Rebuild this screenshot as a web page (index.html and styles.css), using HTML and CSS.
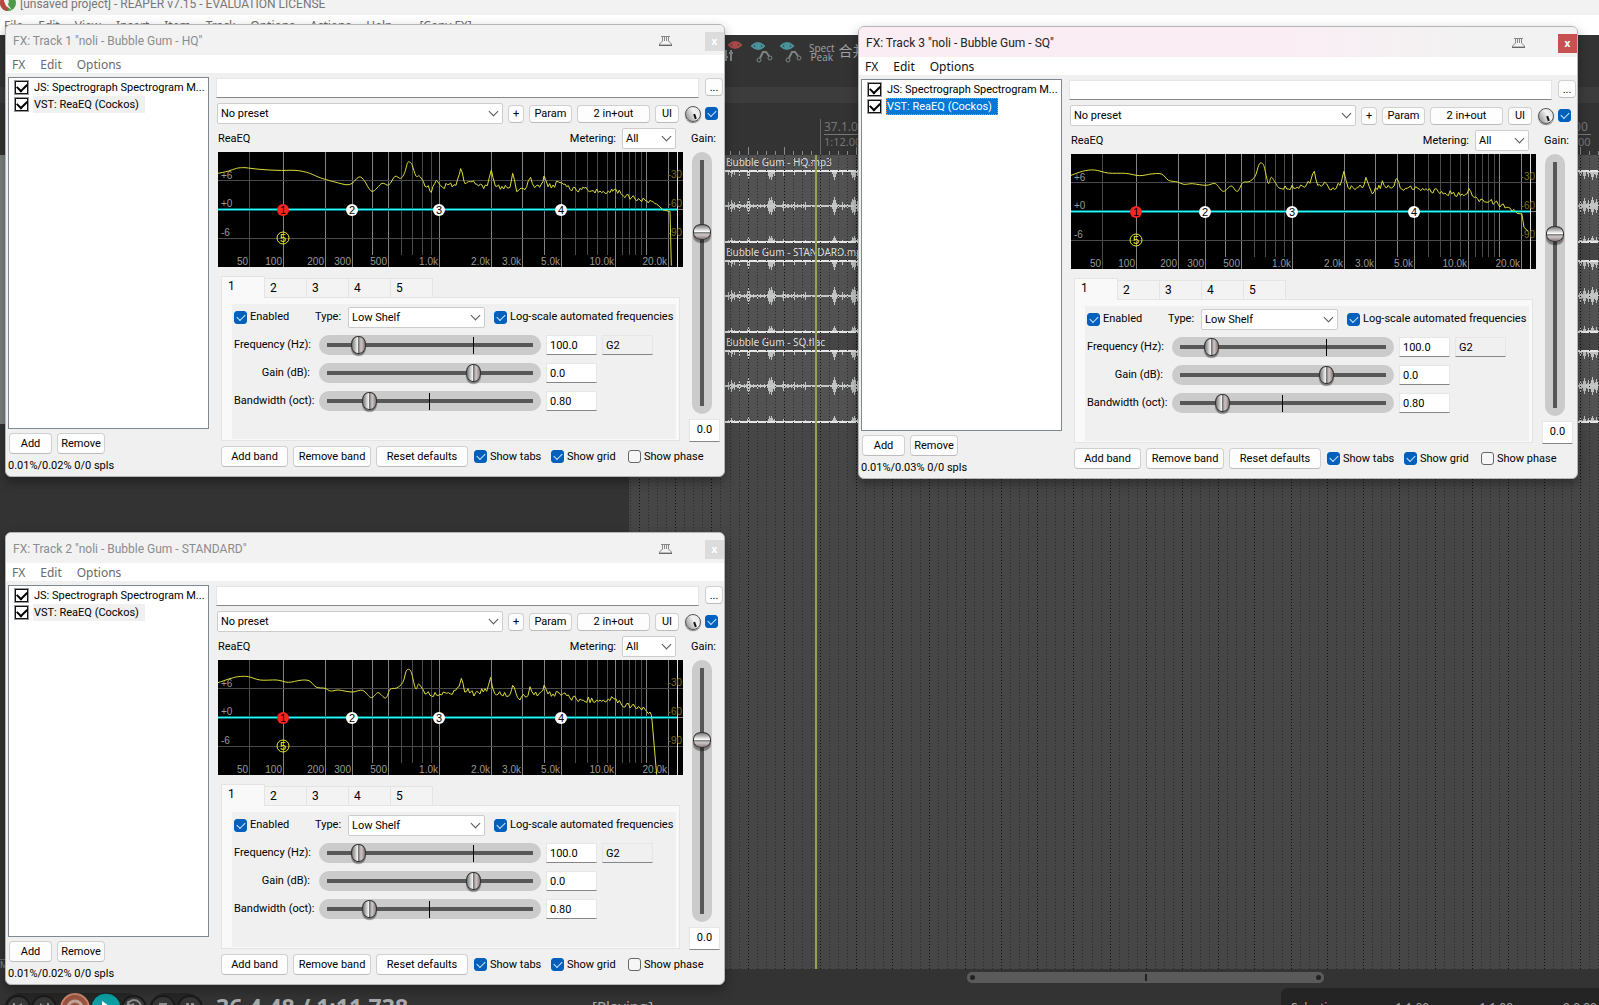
FILE: index.html
```html
<!DOCTYPE html>
<html lang="en">
<head>
<meta charset="utf-8">
<title>[unsaved project] - REAPER v7.15 - EVALUATION LICENSE</title>
<link rel="stylesheet" href="styles.css">
</head>
<body>
<header class="app-title">
  <svg class="app-logo" viewBox="0 0 16 16" aria-hidden="true">
    <circle cx="8" cy="8" r="8" fill="#4f9a4a"/>
    <path d="M0 8a8 8 0 0 1 5-7.500l3 15.500A8 8 0 0 1 0 8z" fill="#b8483f"/>
    <path d="M4 1l5 5-1 4 4 5-6-4-2-5z" fill="#f2f2f2"/>
  </svg>
  <span>[unsaved project] - REAPER v7.15 - EVALUATION LICENSE</span>
</header>
<nav class="app-menu">
  <button>File</button><button>Edit</button><button>View</button><button>Insert</button><button>Item</button><button>Track</button><button>Options</button><button>Actions</button><button>Help</button><button class="menu-extra">[Copy FX]</button>
</nav>
<div class="toolbar">
  <svg class="tool tool-red" viewBox="0 0 22 24" aria-hidden="true">
    <path d="M7 5q6-6 12 0q-6 6-12 0z" fill="none" stroke="#a84a4a" stroke-width="2"/><circle cx="13" cy="5" r="3" fill="#a84a4a"/>
    <path d="M4 10v11M9 10v11M2 17h4M7 13h4" stroke="#7d8484" stroke-width="2"/>
  </svg>
  <svg class="tool" viewBox="0 0 22 24" aria-hidden="true">
    <path d="M1 6q6-6 12 0q-6 6-12 0z" fill="none" stroke="#4a929c" stroke-width="2"/><circle cx="7" cy="6" r="3" fill="#4a929c"/>
    <g fill="none" stroke="#7d8484"><circle cx="8" cy="20" r="2"/><circle cx="19" cy="18" r="2"/><path d="M9 18l3-6h3l3 4" stroke-width="2"/></g>
  </svg>
  <svg class="tool" viewBox="0 0 22 24" aria-hidden="true">
    <path d="M1 6q6-6 12 0q-6 6-12 0z" fill="none" stroke="#4a929c" stroke-width="2"/><circle cx="7" cy="6" r="3" fill="#4a929c"/>
    <g fill="none" stroke="#7d8484"><circle cx="8" cy="20" r="2"/><circle cx="19" cy="18" r="2"/><path d="M9 18l3-6h3l3 4" stroke-width="2"/></g>
  </svg>
  <button class="tool-text">Spect<br>Peak</button>
  <button class="tool-text tool-cjk">合并</button>
</div>
<div class="dock-strip"></div>
<main class="workspace">
  <aside class="track-panel"><div class="track-meters"></div><span class="master-label">M</span></aside>
  <section class="arrange">
    <div class="ruler">
      <svg class="ruler-ticks" aria-hidden="true"></svg>
      <div class="ruler-mark"><span>37.1.00</span><span>1:12.000</span></div>
      <div class="ruler-mark ruler-mark-far"><span>39.1.00</span><span>1:16.000</span></div>
    </div>
    <div class="lanes">
      <div class="item"><div class="item-name">Bubble Gum - HQ.mp3</div><svg class="wave" aria-hidden="true"></svg></div>
      <div class="item"><div class="item-name">Bubble Gum - STANDARD.mp3</div><svg class="wave" aria-hidden="true"></svg></div>
      <div class="item"><div class="item-name">Bubble Gum - SQ.flac</div><svg class="wave" aria-hidden="true"></svg></div>
      <svg class="grid-lines" aria-hidden="true"></svg>
      <div class="play-cursor"></div>
    </div>
  </section>
</main>
<div class="scroll-row"><div class="scroll-thumb"><i></i><b></b><i></i></div></div>
<footer class="transport">
  <svg class="transport-buttons" viewBox="0 0 210 20" aria-hidden="true">
    <rect x="4" y="1" width="138" height="34" rx="16" fill="#262626"/><rect x="149" y="1" width="54" height="34" rx="16" fill="#262626"/>
    <g fill="#363636" stroke="#1b1b1b" stroke-width="2"><circle cx="18" cy="16" r="12"/><circle cx="44" cy="16" r="12"/><circle cx="134" cy="16" r="12"/><circle cx="163" cy="16" r="12"/><circle cx="190" cy="16" r="12"/></g>
    <circle cx="75" cy="16" r="14" fill="#9a5540" stroke="#c9866a" stroke-width="2"/><circle cx="75" cy="16" r="7" fill="none" stroke="#c0a59b" stroke-width="3"/>
    <circle cx="106" cy="16" r="15" fill="#0b9fa4" stroke="#1b1b1b"/><path d="M102 9l10 7-10 7z" fill="#fff"/>
    <g fill="#8d8d8d"><path d="M13 11h2v8h-2zM22 11v8l-6-4zM40 11l6 4-6 4zM47 11h2v8h-2zM159 11h8v8h-8zM186 11h3v8h-3zM191 11h3v8h-3z"/></g>
    <path d="M129 20a7 7 0 1 1 10 0M128 9l1 5 5-2" fill="none" stroke="#8d8d8d" stroke-width="2"/>
  </svg>
  <span class="position">36.4.48 / 1:11.738</span>
  <span class="state">[Playing]</span>
  <div class="selection"><span>Selection:</span><span>1.1.00</span><span>1.1.00</span><span>0.0.00</span></div>
</footer>

<template id="fx-window">
  <section class="fx">
    <header class="fx-title">
      <h2></h2>
      <svg class="pin" viewBox="0 0 15 12" aria-hidden="true"><path d="M3 1.500h9M4.500 2v4l-3 3v1h12v-1l-3-3V2M6.500 2v4M8.500 2v4" fill="none" stroke="#888"/><path d="M1 10.500h13" stroke="#666"/></svg>
      <button class="close" aria-label="Close">x</button>
    </header>
    <nav class="fx-menu"><button>FX</button><button>Edit</button><button>Options</button></nav>
    <div class="fx-body">
      <div class="chain">
        <div class="chain-list">
          <label><input type="checkbox" checked><span>JS: Spectrograph Spectrogram M...</span></label>
          <label class="current"><input type="checkbox" checked><span>VST: ReaEQ (Cockos)</span></label>
        </div>
        <div class="chain-buttons"><button class="btn">Add</button><button class="btn">Remove</button></div>
        <p class="cpu"></p>
      </div>
      <div class="plugin">
        <div class="comment-row"><input type="text" aria-label="FX comment"><button class="btn more">...</button></div>
        <div class="preset-row">
          <span class="select preset"><select aria-label="Preset"><option>No preset</option></select></span>
          <button class="btn plus">+</button><button class="btn param">Param</button><button class="btn pins">2 in+out</button><button class="btn ui">UI</button>
          <span class="knob"></span><input class="tick" type="checkbox" checked aria-label="Bypass">
        </div>
        <div class="reaeq">
          <div class="eq-main">
            <div class="eq-head"><span class="eq-name">ReaEQ</span><label class="metering">Metering: <span class="select"><select><option>All</option></select></span></label></div>
            <svg class="graph" viewBox="0 0 465 115" role="img" aria-label="EQ curve"></svg>
            <div class="tabs"><button class="on">1</button><button>2</button><button>3</button><button>4</button><button>5</button></div>
            <div class="band">
              <div class="band-inner">
                <div class="band-top">
                  <label class="check enabled"><input class="tick" type="checkbox" checked>Enabled</label>
                  <label class="type">Type: <span class="select"><select><option>Low Shelf</option></select></span></label>
                  <label class="check"><input class="tick" type="checkbox" checked>Log-scale automated frequencies</label>
                </div>
                <div class="param-row"><label>Frequency (Hz):</label><span class="slide tick-709"><input type="range" max="1000" value="154"></span><input type="text" value="100.0" aria-label="Frequency value"><input type="text" value="G2" readonly aria-label="Note"></div>
                <div class="param-row"><label>Gain (dB):</label><span class="slide tick-709"><input type="range" max="1000" value="709"></span><input type="text" value="0.0" aria-label="Gain value"></div>
                <div class="param-row"><label>Bandwidth (oct):</label><span class="slide tick-495"><input type="range" max="1000" value="208"></span><input type="text" value="0.80" aria-label="Bandwidth value"></div>
              </div>
            </div>
            <div class="eq-foot">
              <button class="btn add-band">Add band</button><button class="btn remove-band">Remove band</button><button class="btn reset">Reset defaults</button>
              <label class="check"><input class="tick" type="checkbox" checked>Show tabs</label>
              <label class="check"><input class="tick" type="checkbox" checked>Show grid</label>
              <label class="check"><input class="tick" type="checkbox">Show phase</label>
            </div>
          </div>
          <div class="eq-side">
            <label class="gain-label">Gain:</label>
            <span class="vslide"><input type="range" max="1000" value="709"></span>
            <input class="gain-value" type="text" value="0.0" aria-label="Output gain value">
          </div>
        </div>
      </div>
    </div>
  </section>
</template>
<script src="script.js"></script>
</body>
</html>
```
FILE: styles.css
```css
* { box-sizing: border-box; }
body {
  margin: 0; height: 100vh; overflow: hidden; display: flex; flex-direction: column;
  background: #333; font: 11px/14px Roboto, "Liberation Sans", sans-serif; color: #000;
}
button, input, select { font: inherit; color: inherit; margin: 0; padding: 0; }
button { border: 0; background: none; white-space: nowrap; }
svg { display: block; }

/* main application frame */
.app-title { flex: none; height: 15px; background: #f2f2f2; display: flex; align-items: center; color: #777; font: 12px/16px Roboto, sans-serif; overflow: hidden; }
.app-title span { margin-top: -7px; }
.app-logo { width: 16px; height: 16px; margin: -10px 4px 0 0; flex: none; }
.app-menu { flex: none; height: 20px; background: #fff; display: flex; gap: 15px; padding-left: 4px; overflow: hidden; color: #6a6a6a; font: 12px/20px "Noto Sans", sans-serif; }
.app-menu button { line-height: 22px; }
.menu-extra { margin-left: 12px; }
.toolbar { flex: none; height: 52px; background: #333; display: flex; padding: 5px 0 0 722px; gap: 7px; }
.tool { width: 22px; height: 24px; flex: none; }
.tool-text { color: #a3a3a3; font: 10px/9px "Open Sans", sans-serif; align-self: start; padding-top: 4px; }
.tool-cjk { font: 14px/16px "Noto Sans CJK SC", sans-serif; margin-left: -3px; padding-top: 2px; }
.dock-strip { flex: none; height: 16px; background: #3c3c3c; }
.workspace { flex: 1; min-height: 0; display: flex; }
.track-panel { flex: none; width: 629px; position: relative; padding-top: 52px; background: #333; color: #888; display: flex; flex-direction: column; justify-content: space-between; }
.track-meters { height: 269px; width: 5px; background: #7c8282; }
.master-label { height: 10px; line-height: 10px; border-top: 1px solid #666; font-size: 9px; }
.arrange { flex: 1; display: flex; flex-direction: column; min-width: 0; }
.ruler { flex: none; height: 52px; position: relative; overflow: hidden; background: #333; }
.ruler-ticks { width: 100%; height: 52px; }
.ruler-mark { position: absolute; left: 195px; top: 17px; display: flex; flex-direction: column; color: #777; font: 12px/14px "Noto Sans", sans-serif; }
.ruler-mark span:first-child { border-bottom: 1px solid #777; }
.ruler-mark span:last-child { font-size: 11px; }
.ruler-mark-far { left: 918px; }
.lanes { flex: 1; position: relative; background: #464646; overflow: hidden; }
.item { height: 90px; background: #525252; border-bottom: 2px solid #454545; }
.item-name { height: 15px; padding-left: 97px; background: #454545; color: #ddd; font: 10px/15px "Noto Sans", sans-serif; }
.item:first-child .item-name { background: #515151; }
.wave { width: 100%; height: 74px; }
.grid-lines { position: absolute; inset: 0; width: 100%; height: 100%; }
.play-cursor { position: absolute; left: 186px; top: 0; bottom: 0; width: 2px; background: #98a24c; }
.scroll-row { flex: none; height: 19px; padding: 3px 0 0 967px; background: #333; }
.scroll-thumb { width: 357px; height: 11px; border-radius: 5px; background: #5a5a5a; display: flex; justify-content: space-between; align-items: center; padding: 0 3px; }
.scroll-thumb i { width: 5px; height: 5px; border-radius: 50%; background: #222; }
.scroll-thumb b { width: 2px; height: 7px; background: #222; }
.transport { flex: none; height: 17px; background: #333; display: flex; overflow: hidden; color: #aaa; }
.transport-buttons { width: 210px; height: 20px; margin-top: 4px; flex: none; }
.position { width: 382px; padding-left: 6px; font: bold 23px/38px "Noto Sans", sans-serif; height: 17px; }
.state { font: 15px/36px "Noto Sans", sans-serif; height: 17px; flex: 1; }
.selection { width: 318px; height: 40px; background: #242424; border-top-left-radius: 6px; display: flex; justify-content: space-between; padding: 10px 2px 0 10px; font: 12px/20px "Noto Sans", sans-serif; }

/* floating FX windows */
.fx {
  position: absolute; width: 720px; border: 1px solid #b5b5b5; border-radius: 6px; background: #f0f0f0;
  overflow: hidden; box-shadow: 0 5px 12px rgba(0,0,0,.35);
}
.fx-title { height: 30px; display: flex; align-items: center; background: #f2f2f2; padding: 0 0 0 7px; color: #8c8c8c; }
.fx-title h2 { flex: 1; margin: 0; padding-top: 2px; font: 12px/16px Roboto, sans-serif; }
.pin { width: 15px; height: 12px; margin: 2px 32px 0 0; }
.close { width: 19px; height: 19px; background: #dcdcdc; color: #fff; font: bold 10px/17px "Noto Sans", sans-serif; margin-top: 3px; }
.fx-menu { height: 18px; display: flex; gap: 15px; background: #fff; padding-left: 6px; color: #6a6a6a; font: 12px/17px "Noto Sans", sans-serif; }
.fx.active .fx-title { background: linear-gradient(90deg, #faeef4 60%, #f2f2f2 85%); color: #222; }
.fx.active .close { background: #c75050; }
.fx.active .fx-menu { color: #111; }
.fx-body { display: flex; gap: 7px; padding: 4px 0 4px 2px; }
.chain { width: 201px; display: flex; flex-direction: column; }
.chain-list { height: 352px; border: 1px solid #7f8790; background: #fff; padding-top: 1px; }
.chain-list label { display: flex; align-items: center; height: 17px; padding-left: 6px; gap: 5px; }
.chain-list label span { padding: 1px 6px 0 1px; line-height: 16px; white-space: nowrap; }
.chain-list .current span { background: #f0f0f0; }
.fx.active .current span { background: #0078d7; color: #fff; outline: 1px dotted #ff8728; outline-offset: -1px; }
.chain-list input, .tick { appearance: none; flex: none; width: 13px; height: 13px; display: grid; place-items: center; }
.chain-list input { border: 1px solid #111; outline: 1px solid #999; background: #fff; }
.chain-list input::after { content: ""; width: 8px; height: 5px; border: solid #000; border-width: 0 0 2px 2px; transform: translateY(-1px) rotate(-45deg); }
.tick { border: 1px solid #666; border-radius: 3px; background: #f6f6f6; }
.tick:checked { border-color: #0060bb; background: #0060bb; }
.tick:checked::after { content: ""; width: 7px; height: 4px; border: solid #dcebfa; border-width: 0 0 1px 1px; transform: translateY(-1px) rotate(-45deg); }
.chain-buttons { display: flex; gap: 5px; padding: 4px 0 4px 1px; }
.btn { flex: none; height: 21px; border: 1px solid #d0d0d0; border-bottom-color: #bcbcbc; border-radius: 4px; background: #fdfdfd; padding-top: 1px; }
.chain-buttons .btn:first-child { width: 43px; }
.chain-buttons .btn:last-child { width: 48px; }
.cpu { margin: 0; line-height: 16px; height: 14px; }
.plugin { flex: 1; padding-top: 1px; min-width: 0; }
input[type=text] { border: 1px solid #e6e6e6; border-bottom-color: #868686; background: #fff; height: 20px; padding: 0 3px; min-width: 0; outline: 0; }
.comment-row { display: flex; gap: 6px; padding-right: 1px; }
.comment-row input { flex: 1; }
.more { width: 18px; height: 18px; line-height: 14px; }
.preset-row { display: flex; align-items: center; padding: 5px 6px 4px 1px; }
.preset-row .btn { height: 18px; }
.preset { flex: 1; }
.select { position: relative; display: inline-flex; height: 21px; }
.select::after { content: ""; position: absolute; right: 6px; top: 5px; width: 6px; height: 6px; border: solid #555; border-width: 0 1px 1px 0; transform: rotate(45deg); pointer-events: none; }
select { appearance: none; width: 100%; border: 1px solid #ccc; border-radius: 2px; background: #fff; padding: 1px 3px 0; }
.plus { width: 16px; margin-left: 5px; }
.param { width: 43px; margin-left: 5px; }
.pins { width: 73px; margin-left: 5px; }
.ui { width: 24px; margin-left: 5px; }
.knob { width: 16px; height: 16px; margin: 0 4px 0 6px; border: 1px solid #555; border-radius: 50%; background: linear-gradient(60deg, #888, #f4f4f4 60%, #ddd); box-shadow: 0 1px 1px #777; }
.knob::after { content: ""; display: block; width: 2px; height: 5px; margin: 7px 0 0 8px; background: #111; transform: rotate(-20deg); }
.reaeq { display: flex; gap: 6px; padding-left: 2px; }
.eq-main { width: 465px; flex: none; }
.eq-head { height: 24px; display: flex; justify-content: space-between; align-items: start; padding-right: 7px; }
.eq-name { line-height: 21px; }
.metering { display: flex; align-items: center; gap: 6px; }
.metering .select { width: 54px; }
.graph { width: 465px; height: 115px; background: #000; font: 10px "Liberation Sans", Arial, sans-serif; }
.graph .minor { stroke: #4a4a4a; }
.graph .major { stroke: #838383; }
.graph .scale { fill: #9a9a9a; text-anchor: end; }
.graph .db { fill: #9a9a9a; }
.graph .level { fill: #77711c; text-anchor: end; }
.graph .node { text-anchor: middle; font-size: 11px; }
.graph .curve { fill: none; stroke: #dcdc3c; vector-effect: non-scaling-stroke; }
.tabs { display: flex; align-items: end; height: 30px; padding-left: 3px; }
.tabs button { width: 42px; height: 19px; border: 1px solid #e4e4e4; border-left: 0; border-bottom: 0; background: #f3f3f3; text-align: left; padding-left: 5px; font-size: 12px; }
.tabs .on { width: 44px; height: 22px; background: #f9f9f9; border-left: 1px solid #e4e4e4; padding: 0 0 4px 6px; margin-bottom: -1px; position: relative; }
.band { margin: 0 3px 0 3px; height: 144px; border: 1px solid #e4e4e4; background: #f9f9f9; padding: 6px 3px 1px 10px; }
.band-inner { height: 135px; background: #f0f0f0; padding: 3px 0 0 2px; display: flex; flex-direction: column; gap: 8px; }
.band-top { display: flex; align-items: center; height: 20px; }
.check { display: flex; align-items: center; gap: 3px; white-space: nowrap; }
.enabled { width: 81px; }
.type { display: flex; align-items: center; justify-content: space-between; width: 170px; margin-right: 9px; }
.type .select { width: 137px; }
.param-row { display: grid; grid-template-columns: 76px 226px 51px 51px; column-gap: 5px; height: 20px; align-items: center; }
.param-row label { text-align: right; white-space: nowrap; }
.param-row .slide { margin-left: 4px; }
.param-row input[readonly] { background: #f0f0f0; }
.slide { position: relative; height: 20px; width: 222px; }
.slide::after { content: ""; position: absolute; top: 2px; width: 1px; height: 17px; background: #000; }
.tick-709::after { left: 154px; }
.tick-495::after { left: 110px; }
.slide input { appearance: none; position: relative; z-index: 1; display: block; width: 222px; height: 20px; background: none; }
.slide::before { content: ""; position: absolute; inset: 0; border-radius: 10px; background: linear-gradient(#575757, #575757) 8px 8px / 206px 4px no-repeat #cbcbcb; }
.slide input::-webkit-slider-thumb { appearance: none; width: 15px; height: 18px; border: 1px solid #333; border-radius: 7px / 8px; background: linear-gradient(90deg, #777, #ddd 35%, #fff 48%, #777 50%, #d0c8c8 70%, #877); box-shadow: 0 2px 1px rgba(0,0,0,.4); }
.eq-foot { display: flex; align-items: center; padding: 5px 0 0 3px; }
.eq-foot .btn { margin-right: 5px; }
.add-band { width: 67px; }
.remove-band { width: 78px; }
.reset { width: 92px; }
.eq-foot .check { width: 76px; flex: none; margin-left: 1px; }
.eq-side { width: 31px; }
.gain-label { display: block; height: 24px; line-height: 21px; padding-left: 2px; }
.vslide { display: block; width: 20px; height: 262px; margin: 0 0 5px 3px; border-radius: 10px; background: linear-gradient(#575757, #575757) 8px 8px / 4px 246px no-repeat #cbcbcb; }
.vslide input { appearance: none; writing-mode: vertical-lr; direction: rtl; display: block; width: 20px; height: 262px; background: none; }
.vslide input::-webkit-slider-thumb { appearance: none; width: 18px; height: 16px; border: 1px solid #333; border-radius: 8px / 7px; background: linear-gradient(#777, #ddd 35%, #fff 48%, #777 50%, #d0c8c8 70%, #877); box-shadow: 0 3px 1px rgba(0,0,0,.4); }
.eq-side input.gain-value { width: 31px; height: 23px; padding-bottom: 3px; text-align: center; }
```
FILE: script.js
```js
// deterministic noise, -1..1
function noise(n) {
  const v = Math.sin(n * 127.1 + 11.7) * 43758.5453;
  return (v - Math.floor(v)) * 2 - 1;
}

// Smooth (Catmull-Rom) up to x = start, then straight pieces with analyser jitter up to x = end.
function curvePath(points, start, end) {
  let d = 'M' + points[0].join(' ');
  for (let i = 1; i < points.length; i++) {
    const [x0, y0] = points[i - 1], [x1, y1] = points[i];
    if (x0 >= end) {
      d += `L${x1} ${y1}`;
    } else if (x0 >= start) {
      for (let x = x0 + 5; x < x1 - 2; x += 5) {
        const t = (x - x0) / (x1 - x0);
        d += `L${x} ${Math.round(y0 + (y1 - y0) * t + noise(x) * 9)}`;
      }
      d += `L${x1} ${y1}`;
    } else {
      const [xa, ya] = points[Math.max(i - 2, 0)], [xb, yb] = points[i + 1];
      d += `C${Math.round(x0 + (x1 - xa) / 6)} ${Math.round(y0 + (y1 - ya) / 6)} ${Math.round(x1 - (xb - x0) / 6)} ${Math.round(y1 - (yb - y0) / 6)} ${x1} ${y1}`;
    }
  }
  return d;
}

const spectra = {
  hq: { box: '24 36 1395 345', points: [[24,100],[55,93],[80,85],[105,83],[150,88],[200,91],[255,91],[290,97],[325,111],[350,119],[375,126],[418,134],[445,112],[460,118],[486,154],[516,130],[536,135],[555,109],[572,115],[584,98],[592,70],[598,66],[606,74],[618,108],[628,108],[640,124],[664,157],[682,124],[698,142],[712,134],[738,136],[752,86],[766,132],[790,122],[806,138],[832,137],[844,90],[856,138],[900,142],[908,100],[920,155],[950,140],[962,112],[974,143],[994,132],[1002,108],[1014,140],[1050,128],[1070,140],[1100,152],[1118,142],[1150,152],[1208,154],[1218,148],[1240,168],[1290,180],[1340,192],[1360,210],[1378,214],[1380,214],[1384,377]] },
  standard: { box: '24 60 1395 345', points: [[24,128],[60,116],[85,110],[115,110],[150,120],[200,120],[235,127],[270,121],[297,122],[318,141],[345,145],[362,153],[385,150],[427,156],[458,151],[484,173],[504,158],[527,174],[540,148],[560,144],[578,128],[588,95],[596,88],[604,98],[617,146],[626,132],[640,150],[660,166],[722,162],[742,143],[754,115],[764,156],[786,152],[792,168],[800,154],[830,154],[842,112],[854,160],[900,164],[908,136],[918,160],[930,180],[940,163],[954,166],[960,140],[972,164],[994,155],[1002,136],[1014,162],[1060,160],[1080,174],[1115,180],[1160,180],[1218,176],[1235,195],[1290,203],[1310,214],[1324,225],[1326,240],[1340,404]] },
  sq: { box: '32 462 1353 345', points: [[32,526],[65,514],[100,510],[140,519],[190,520],[232,527],[265,522],[295,522],[316,541],[342,546],[360,553],[385,551],[425,556],[452,551],[475,574],[498,558],[516,574],[532,548],[550,545],[567,530],[578,496],[586,489],[594,500],[606,550],[615,532],[628,550],[645,566],[712,562],[730,540],[740,514],[750,556],[776,552],[784,568],[815,556],[826,514],[838,562],[880,564],[890,532],[900,560],[909,582],[918,563],[932,566],[938,542],[950,564],[972,558],[980,536],[990,564],[1035,560],[1060,570],[1100,574],[1140,582],[1184,582],[1190,566],[1205,592],[1250,604],[1300,622],[1330,640],[1344,642],[1350,682],[1362,694]] }
};

const full = [[107,1],[134,1],[170,1],[221,1],[273,1],[304,1],[343,1],[397,1],[450,1],[65,1],[31,0]];
const short = [154,326,428,183,194,204,213,357,369,379,389,404,411,417,423];
const freqs = [[30,'50'],[64,'100'],[106,'200'],[133,'300'],[169,'500'],[220,'1.0k'],[272,'2.0k'],[303,'3.0k'],[342,'5.0k'],[396,'10.0k'],[449,'20.0k']];

function graphMarkup(s) {
  let g = '<g shape-rendering="crispEdges">';
  short.forEach((x, i) => g += `<path class="${i < 3 ? 'major' : 'minor'}" d="M${x} 0V103"/>`);
  full.forEach(([x, m]) => g += `<path class="${m ? 'major' : 'minor'}" d="M${x} 0V115"/>`);
  [28, 86].forEach(y => g += `<path class="minor" d="M0 ${y}H465"/>`);
  g += '<path class="major" d="M0 57H465"/><path d="M459 0V115" stroke="#ddd"/></g>';
  freqs.forEach(([x, t]) => g += `<text class="scale" x="${x}" y="113">${t}</text>`);
  [[27, '+6'], [55, '+0'], [84, '-6']].forEach(([y, t]) => g += `<text class="db" x="3" y="${y}">${t}</text>`);
  [[26, '-30'], [55, '-60'], [84, '-90']].forEach(([y, t]) => g += `<text class="level" x="464" y="${y}">${t}</text>`);
  g += '<g shape-rendering="crispEdges"><path d="M0 56h459v3H0z" fill="#0a7273"/></g>';
  g += `<svg viewBox="${s.box}" width="465" height="115" preserveAspectRatio="none"><path class="curve" d="${curvePath(s.points, 640, 1324)}"/></svg>`;
  g += '<path d="M0 57h459v1H0z" fill="#2ff" shape-rendering="crispEdges"/>';
  [[65, 1, '#f22'], [134, 2, '#fff'], [221, 3, '#fff'], [343, 4, '#fff']].forEach(([x, n, c]) =>
    g += `<circle cx="${x}" cy="58" r="6" fill="${c}"/><text class="node" x="${x}" y="62">${n}</text>`);
  g += '<circle cx="65" cy="86" r="6" fill="none" stroke="#ee2"/><text class="node" x="65" y="90" fill="#ee2">5</text>';
  return g;
}

const windows = [
  { left: 5, top: 24, title: 'FX: Track 1 "noli - Bubble Gum - HQ"', cpu: '0.01%/0.02% 0/0 spls', spectrum: 'hq' },
  { left: 5, top: 532, title: 'FX: Track 2 "noli - Bubble Gum - STANDARD"', cpu: '0.01%/0.02% 0/0 spls', spectrum: 'standard' },
  { left: 858, top: 26, title: 'FX: Track 3 "noli - Bubble Gum - SQ"', cpu: '0.01%/0.03% 0/0 spls', spectrum: 'sq', active: true }
];

windows.forEach((w, n) => {
  const node = document.getElementById('fx-window').content.cloneNode(true);
  const fx = node.querySelector('.fx');
  fx.style.left = w.left + 'px';
  fx.style.top = w.top + 'px';
  fx.classList.toggle('active', !!w.active);
  fx.querySelector('h2').textContent = w.title;
  fx.querySelector('.cpu').textContent = w.cpu;
  fx.querySelector('.graph').innerHTML = graphMarkup(spectra[w.spectrum]);
  fx.querySelectorAll('.param-row, .eq-side').forEach((row, i) => {
    const range = row.querySelector('input[type=range]');
    range.id = `range-${n}-${i}`;
    row.querySelector('label').htmlFor = range.id;
  });
  document.body.append(fx);
});

// Timeline: minor divisions, with a stronger line every fourth one.
let ticks = '', lines = '';
for (let k = -21; k < 87; k++) {
  const x = Math.round(191 + k * 9.05), beat = k % 4 === 0, bar = k % 80 === 0;
  ticks += `<path d="M${x} ${bar ? 16 : beat ? 44 : 48}V52" stroke="${bar ? '#666' : '#888'}"/>`;
  lines += `<path d="M${x} 0V1200" stroke="${beat ? '#111' : '#2b2b2b'}" stroke-dasharray="1 2"/>`;
}
document.querySelector('.ruler-ticks').innerHTML = `<g shape-rendering="crispEdges">${ticks}</g>`;
document.querySelector('.grid-lines').innerHTML = `<g shape-rendering="crispEdges">${lines}</g>`;

const hits = [[99,3],[102,5],[105,3],[110,4],[119,7],[128,2],[140,7],[142,8],[145,4],[154,4],[165,3],[176,3],[205,8],[213,3],[223,6],[225,8],[228,4],[951,5],[955,7],[959,5],[963,8],[967,6]];
let wave = '';
for (let x = 90; x < 980; x++) {
  let a = 0;
  hits.forEach(([h, s]) => a = Math.max(a, s - Math.abs(x - h) * 3));
  if (!a && noise(x * 3) > .7) a = 1;
  if (a > 0) wave += `M${x} ${35 - a}V${37 + a}`;
  if (a > 1) wave += `M${x} 2V${2 + a}M${x} 72V${72 - Math.round(a * 0.8)}`;
}
document.querySelectorAll('.wave').forEach(svg => {
  svg.innerHTML = `<g shape-rendering="crispEdges"><path d="${wave}" stroke="#bfc1c1"/><path d="M0 36H1200" stroke="#c6c8c8" stroke-width="2"/><path d="M0 1H1200M0 72H1200" stroke="#e6e6e6" stroke-width="2"/></g>`;
});
```
